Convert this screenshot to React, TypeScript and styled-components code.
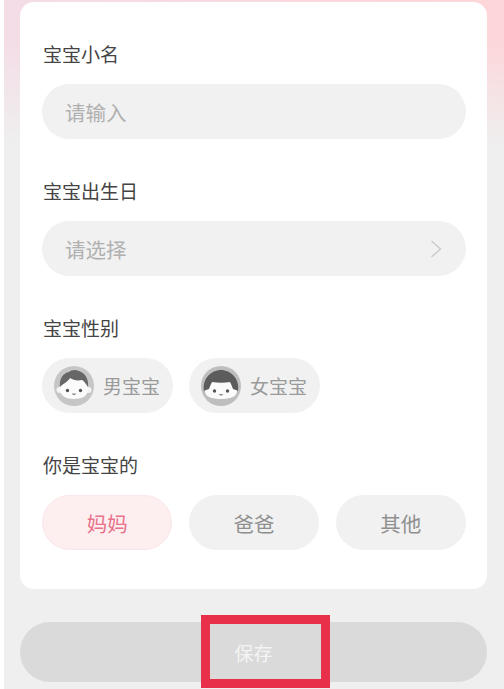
import styled, { createGlobalStyle } from 'styled-components'

const GlobalStyle = createGlobalStyle`
	html, body {
		margin: 0;
		padding: 0;
		background: #ffffff;
	}
	* {
		box-sizing: border-box;
	}
`

function BoyAvatar() {
	return (
		<svg width="40" height="40" viewBox="0 0 40 40">
			<circle cx="20" cy="20" r="20" fill="#c6c6c6" />
			<circle cx="5.5" cy="24" r="3" fill="#f4f4f4" />
			<circle cx="34.5" cy="24" r="3" fill="#f4f4f4" />
			<path d="M6 23c0-8 6-12 14-12s14 4 14 12c0 7-6 10-14 10S6 30 6 23z" fill="#fbfbfb" />
			<path d="M6 21C5 13 9 7 15 6c2-2 6-3 10-1 6 2 10 8 9 16-2-3-4-6-6-7-5 1-9 0-12-2-1 3-6 5-10 9z" fill="#676767" />
			<circle cx="13.5" cy="24.5" r="1.7" fill="#555555" />
			<circle cx="26.5" cy="24.5" r="1.7" fill="#555555" />
			<path d="M18.5 27.5c.8 1.2 2.2 1.2 3 0" stroke="#777777" strokeWidth="1.2" fill="none" />
		</svg>
	)
}

function GirlAvatar() {
	return (
		<svg width="40" height="40" viewBox="0 0 40 40">
			<circle cx="20" cy="20" r="20" fill="#bebebe" />
			<path d="M4 25c0-7 7-10 16-10s16 3 16 10c0 6-7 8-16 8S4 31 4 25z" fill="#fbfbfb" />
			<path d="M3 25C1 13 10 4 20 4s19 9 17 21c-1-1-3-1-5-2-1-3-2-5-3-7-6 1-12 1-18 0-1 2-2 4-3 7-2 1-4 1-5 2z" fill="#5c5c5c" />
			<circle cx="13.5" cy="25" r="1.7" fill="#555555" />
			<circle cx="26.5" cy="25" r="1.7" fill="#555555" />
			<path d="M18.5 28c.8 1.2 2.2 1.2 3 0" stroke="#777777" strokeWidth="1.2" fill="none" />
		</svg>
	)
}

function App() {
	return (
		<>
			<GlobalStyle />
			<Page>
				<Card>
					<Field>
						<Label>宝宝小名</Label>
						<Input>请输入</Input>
					</Field>
					<Field>
						<Label>宝宝出生日</Label>
						<Input>
							请选择
							<svg width="12" height="20" viewBox="0 0 12 20">
								<path d="M1.5 2l9 8-9 8" stroke="#cccccc" strokeWidth="1.5" fill="none" />
							</svg>
						</Input>
					</Field>
					<Field>
						<Label>宝宝性别</Label>
						<Options>
							<GenderChip>
								<BoyAvatar />
								男宝宝
							</GenderChip>
							<GenderChip>
								<GirlAvatar />
								女宝宝
							</GenderChip>
						</Options>
					</Field>
					<Field>
						<Label>你是宝宝的</Label>
						<Options>
							<RoleChip $active>妈妈</RoleChip>
							<RoleChip>爸爸</RoleChip>
							<RoleChip>其他</RoleChip>
						</Options>
					</Field>
				</Card>
				<SaveButton>
					保存
					<Highlight />
				</SaveButton>
			</Page>
		</>
	)
}
export default App

const Page = styled.div`
	width: 500px;
	height: 689px;
	margin-left: 4px;
	padding: 2px 17px 0 16px;
	overflow: hidden;
	font-family: 'Liberation Sans', 'Noto Sans CJK SC', sans-serif;
	background:
		linear-gradient(180deg, transparent 40px, #efefef 145px),
		linear-gradient(90deg, #f4dde7, #fdd6d9);
`
const Card = styled.div`
	height: 587px;
	padding: 40px 21px 0 22px;
	background: #ffffff;
	border-radius: 14px;
	display: flex;
	flex-direction: column;
	gap: 40px;
`
const Field = styled.div`
	display: flex;
	flex-direction: column;
	gap: 14px;
`
const Label = styled.div`
	height: 28px;
	padding-left: 1px;
	font-size: 19px;
	line-height: 28px;
	color: #444444;
`
const Input = styled.div`
	height: 55px;
	padding: 0 24px 0 23px;
	display: flex;
	align-items: center;
	justify-content: space-between;
	font-size: 20.5px;
	color: #b0b0b0;
	background: #f1f1f1;
	border-radius: 28px;
`
const Options = styled.div`
	display: flex;
	gap: 16.5px;
`
const GenderChip = styled.div`
	width: 130.5px;
	height: 55px;
	padding-left: 12px;
	display: flex;
	align-items: center;
	gap: 9px;
	font-size: 19px;
	color: #9a9a9a;
	background: #f1f1f1;
	border-radius: 28px;
`
const RoleChip = styled.div<{ $active?: boolean }>`
	flex: 1;
	height: 55px;
	display: flex;
	align-items: center;
	justify-content: center;
	font-size: 20.5px;
	color: ${({ $active }) => ($active ? '#e8728a' : '#8f8f8f')};
	background: ${({ $active }) => ($active ? '#fdeef0' : '#f1f1f1')};
	border: 1px solid ${({ $active }) => ($active ? '#fbe6ea' : '#f1f1f1')};
	border-radius: 28px;
`
const SaveButton = styled.div`
	position: relative;
	height: 60px;
	margin-top: 33px;
	display: flex;
	align-items: center;
	justify-content: center;
	font-size: 19px;
	color: #f4f4f4;
	background: #dadada;
	border-radius: 30px;
`
const Highlight = styled.div`
	position: absolute;
	left: 181px;
	top: -7px;
	width: 129px;
	height: 73px;
	border: 9px solid #e8304a;
`
